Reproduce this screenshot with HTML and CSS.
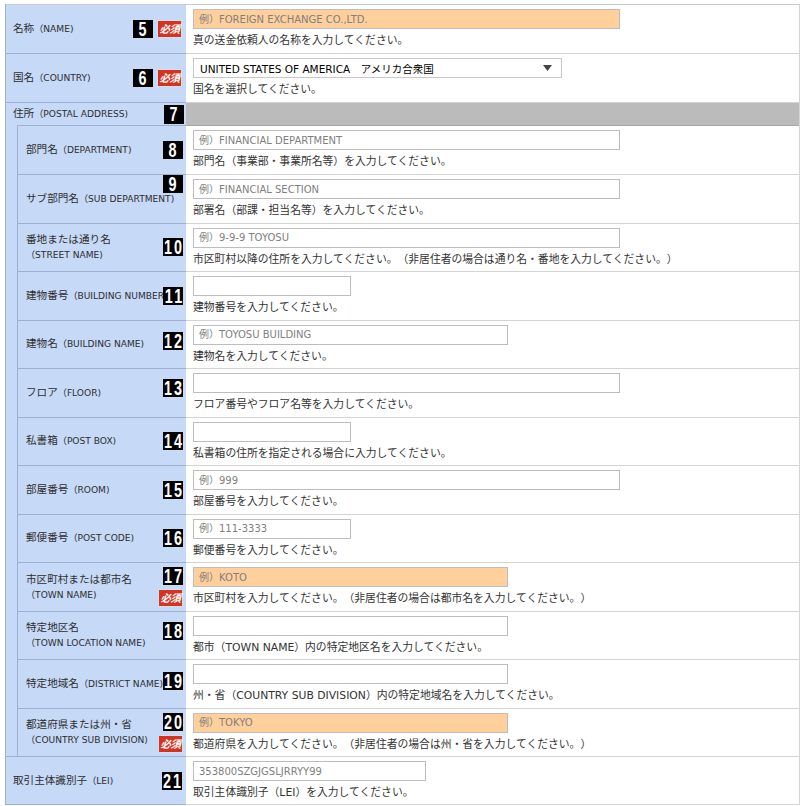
FILE: index.html
```html
<!DOCTYPE html>
<html lang="ja">
<head>
<meta charset="utf-8">
<title>住所入力</title>
<link rel="stylesheet" href="styles.css">
</head>
<body>
<div class="form">

  <div class="row top">
    <div class="label">
      <div class="ltext">名称<span class="en">（NAME)</span></div>
      <div class="badges"><span class="num"><span>5</span></span><span class="req">必須</span></div>
    </div>
    <div class="value">
      <input class="inp full must" placeholder="例）FOREIGN EXCHANGE CO.,LTD.">
      <div class="hint">真の送金依頼人の名称を入力してください。</div>
    </div>
  </div>

  <div class="row top">
    <div class="label">
      <div class="ltext">国名<span class="en">（COUNTRY)</span></div>
      <div class="badges"><span class="num"><span>6</span></span><span class="req">必須</span></div>
    </div>
    <div class="value">
      <div class="select"><span class="sel-text">UNITED STATES OF AMERICA　アメリカ合衆国</span><svg class="arrow" width="9" height="6" viewBox="0 0 9 6"><path d="M0 0H9L4.5 6Z" fill="#444"/></svg></div>
      <div class="hint">国名を選択してください。</div>
    </div>
  </div>

  <div class="addr">
    <div class="addr-head">
      <div class="label">
        <div class="ltext">住所<span class="en">（POSTAL ADDRESS)</span></div>
        <div class="badges"><span class="num"><span>7</span></span></div>
      </div>
      <div class="bar"></div>
    </div>
    <div class="addr-body">
      <div class="strip"></div>
      <div class="subrows">

        <div class="row sub first">
          <div class="label">
            <div class="ltext">部門名<span class="en">（DEPARTMENT)</span></div>
            <div class="badges"><span class="num"><span>8</span></span></div>
          </div>
          <div class="value">
            <input class="inp full" placeholder="例）FINANCIAL DEPARTMENT">
            <div class="hint">部門名（事業部・事業所名等）を入力してください。</div>
          </div>
        </div>

        <div class="row sub">
          <div class="label">
            <div class="ltext">サブ部門名<span class="en">（SUB DEPARTMENT)</span></div>
            <div class="badges at-top"><span class="num"><span>9</span></span></div>
          </div>
          <div class="value">
            <input class="inp full" placeholder="例）FINANCIAL SECTION">
            <div class="hint">部署名（部課・担当名等）を入力してください。</div>
          </div>
        </div>

        <div class="row sub">
          <div class="label">
            <div class="ltext">番地または通り名<br><span class="en">（STREET NAME)</span></div>
            <div class="badges"><span class="num two"><span>10</span></span></div>
          </div>
          <div class="value">
            <input class="inp full" placeholder="例）9-9-9 TOYOSU">
            <div class="hint">市区町村以降の住所を入力してください。（非居住者の場合は通り名・番地を入力してください。）</div>
          </div>
        </div>

        <div class="row sub">
          <div class="label">
            <div class="ltext">建物番号<span class="en">（BUILDING NUMBER)</span></div>
            <div class="badges"><span class="num two"><span>11</span></span></div>
          </div>
          <div class="value">
            <input class="inp small">
            <div class="hint">建物番号を入力してください。</div>
          </div>
        </div>

        <div class="row sub">
          <div class="label">
            <div class="ltext">建物名<span class="en">（BUILDING NAME)</span></div>
            <div class="badges up-s"><span class="num two"><span>12</span></span></div>
          </div>
          <div class="value">
            <input class="inp mid" placeholder="例）TOYOSU BUILDING">
            <div class="hint">建物名を入力してください。</div>
          </div>
        </div>

        <div class="row sub">
          <div class="label">
            <div class="ltext">フロア<span class="en">（FLOOR)</span></div>
            <div class="badges up-l"><span class="num two"><span>13</span></span></div>
          </div>
          <div class="value">
            <input class="inp full">
            <div class="hint">フロア番号やフロア名等を入力してください。</div>
          </div>
        </div>

        <div class="row sub">
          <div class="label">
            <div class="ltext">私書箱<span class="en">（POST BOX)</span></div>
            <div class="badges"><span class="num two"><span>14</span></span></div>
          </div>
          <div class="value">
            <input class="inp small">
            <div class="hint">私書箱の住所を指定される場合に入力してください。</div>
          </div>
        </div>

        <div class="row sub">
          <div class="label">
            <div class="ltext">部屋番号<span class="en">（ROOM)</span></div>
            <div class="badges"><span class="num two"><span>15</span></span></div>
          </div>
          <div class="value">
            <input class="inp full" placeholder="例）999">
            <div class="hint">部屋番号を入力してください。</div>
          </div>
        </div>

        <div class="row sub">
          <div class="label">
            <div class="ltext">郵便番号<span class="en">（POST CODE)</span></div>
            <div class="badges"><span class="num two"><span>16</span></span></div>
          </div>
          <div class="value">
            <input class="inp small" placeholder="例）111-3333">
            <div class="hint">郵便番号を入力してください。</div>
          </div>
        </div>

        <div class="row sub">
          <div class="label">
            <div class="ltext">市区町村または都市名<br><span class="en">（TOWN NAME)</span></div>
            <div class="badges stack"><span class="num two"><span>17</span></span><span class="req">必須</span></div>
          </div>
          <div class="value">
            <input class="inp mid must" placeholder="例）KOTO">
            <div class="hint">市区町村を入力してください。（非居住者の場合は都市名を入力してください。）</div>
          </div>
        </div>

        <div class="row sub">
          <div class="label">
            <div class="ltext">特定地区名<br><span class="en">（TOWN LOCATION NAME)</span></div>
            <div class="badges up-l"><span class="num two"><span>18</span></span></div>
          </div>
          <div class="value">
            <input class="inp mid">
            <div class="hint">都市（TOWN NAME）内の特定地区名を入力してください。</div>
          </div>
        </div>

        <div class="row sub">
          <div class="label">
            <div class="ltext">特定地域名<span class="en">（DISTRICT NAME)</span></div>
            <div class="badges up-s"><span class="num two"><span>19</span></span></div>
          </div>
          <div class="value">
            <input class="inp mid">
            <div class="hint">州・省（COUNTRY SUB DIVISION）内の特定地域名を入力してください。</div>
          </div>
        </div>

        <div class="row sub">
          <div class="label">
            <div class="ltext">都道府県または州・省<br><span class="en">（COUNTRY SUB DIVISION)</span></div>
            <div class="badges stack"><span class="num two"><span>20</span></span><span class="req">必須</span></div>
          </div>
          <div class="value">
            <input class="inp mid must" placeholder="例）TOKYO">
            <div class="hint">都道府県を入力してください。（非居住者の場合は州・省を入力してください。）</div>
          </div>
        </div>

      </div>
    </div>
  </div>

  <div class="row top last">
    <div class="label">
      <div class="ltext">取引主体識別子<span class="en">（LEI)</span></div>
      <div class="badges"><span class="num two"><span>21</span></span></div>
    </div>
    <div class="value">
      <input class="inp lei" placeholder="353800SZGJGSLJRRYY99">
      <div class="hint">取引主体識別子（LEI）を入力してください。</div>
    </div>
  </div>

</div>
</body>
</html>
```
FILE: styles.css
```css
html, body {
  margin: 0;
  padding: 0;
  background: #fff;
}

body {
  font-family: "DejaVu Sans", "Noto Sans CJK JP", sans-serif;
  font-size: 10.5px;
  color: #333;
  text-spacing-trim: space-all;
}

.form {
  margin: 4px 0 0 5px;
  width: 795px;
  box-sizing: border-box;
  border-top: 1px solid #c4cbd8;
  border-left: 1px solid #9db0d3;
  border-right: 1px solid #d4d4d4;
}

.row {
  display: flex;
  height: 49px;
  box-sizing: border-box;
}

.row.last {
  height: 48px;
}

.label {
  width: 180px;
  flex-shrink: 0;
  box-sizing: border-box;
  background: #c6d9f7;
  border-bottom: 1px solid #9db0d3;
  display: flex;
  align-items: center;
  padding: 0 4px 0 7px;
  font-size: 10.6px;
  line-height: 15px;
  color: #2e2e2e;
}

.ltext {
  flex: 1 1 auto;
  min-width: 0;
  white-space: nowrap;
}

.en {
  font-size: 9.1px;
}

.badges {
  display: flex;
  align-items: center;
  gap: 4px;
  flex-shrink: 0;
  position: relative;
}

.badges.at-top {
  align-self: flex-start;
}

.badges.stack {
  flex-direction: column;
  align-items: flex-end;
  gap: 4px;
}

.badges.up-s {
  margin-bottom: 6px;
}

.badges.up-l {
  margin-bottom: 10px;
}

.num {
  display: flex;
  justify-content: center;
  align-items: center;
  width: 20px;
  height: 18px;
  background: #000;
}

.num span {
  display: block;
  color: #fff;
  font-family: "Liberation Sans", "DejaVu Sans", sans-serif;
  font-weight: bold;
  font-size: 20px;
  line-height: 18px;
  transform: scaleX(0.72);
  white-space: nowrap;
}

.num.two span {
  letter-spacing: 3px;
  margin-right: -3px;
}

.req {
  display: block;
  width: 25px;
  height: 18px;
  box-sizing: border-box;
  border: 1px solid #c4e4f2;
  background: #d8321f;
  color: #fff;
  font-family: "Noto Sans CJK JP", sans-serif;
  font-weight: bold;
  font-style: italic;
  font-size: 10.5px;
  line-height: 15px;
  text-align: center;
  letter-spacing: -0.5px;
}

.row.sub .label {
  width: 168px;
  padding: 0 3px 0 8px;
}

.value {
  flex: 1;
  min-width: 0;
  box-sizing: border-box;
  border-bottom: 1px solid #d4d4d4;
  padding: 4px 0 0 7px;
}

.inp {
  display: block;
  margin: 0;
  height: 20px;
  box-sizing: border-box;
  border: 1px solid #bdbdbd;
  background: #fff;
  padding: 0 5px;
  font-family: "DejaVu Sans", "Noto Sans CJK JP", sans-serif;
  font-size: 10px;
  color: #333;
  outline: none;
}

.inp::placeholder {
  color: #808080;
  opacity: 1;
}

.inp.must {
  background: #ffcf9c;
}

.full { width: 427px; }
.mid { width: 315px; }
.small { width: 158px; }
.lei { width: 233px; }

.hint {
  margin-top: 4px;
  font-size: 10.8px;
  line-height: 16px;
  white-space: nowrap;
}

.select {
  width: 369px;
  height: 20px;
  box-sizing: border-box;
  border: 1px solid #c8c8c8;
  background: #fff;
  display: flex;
  align-items: center;
  padding: 0 9px 0 6px;
  color: #000;
}

.sel-text {
  flex: 1;
  white-space: nowrap;
}

.arrow {
  display: block;
}

.addr-head {
  display: flex;
  height: 22px;
}

.addr-head .label {
  border-bottom: none;
  padding-right: 2px;
}

.addr-head .num {
  height: 19px;
}

.bar {
  flex: 1;
  background: #bbbbbb;
}

.addr-body {
  display: flex;
}

.strip {
  width: 11px;
  flex-shrink: 0;
  background: #c6d9f7;
  border-bottom: 1px solid #9db0d3;
}

.subrows {
  flex: 1;
  min-width: 0;
  border-left: 1px solid #9db0d3;
}

.row.sub {
  height: 48.54px;
}

.row.sub.first {
  height: 50px;
}

.row.sub.first .label {
  border-top: 1px solid #9db0d3;
}

.row.sub.first .value {
  border-top: 1px solid #a8a8a8;
}
```
